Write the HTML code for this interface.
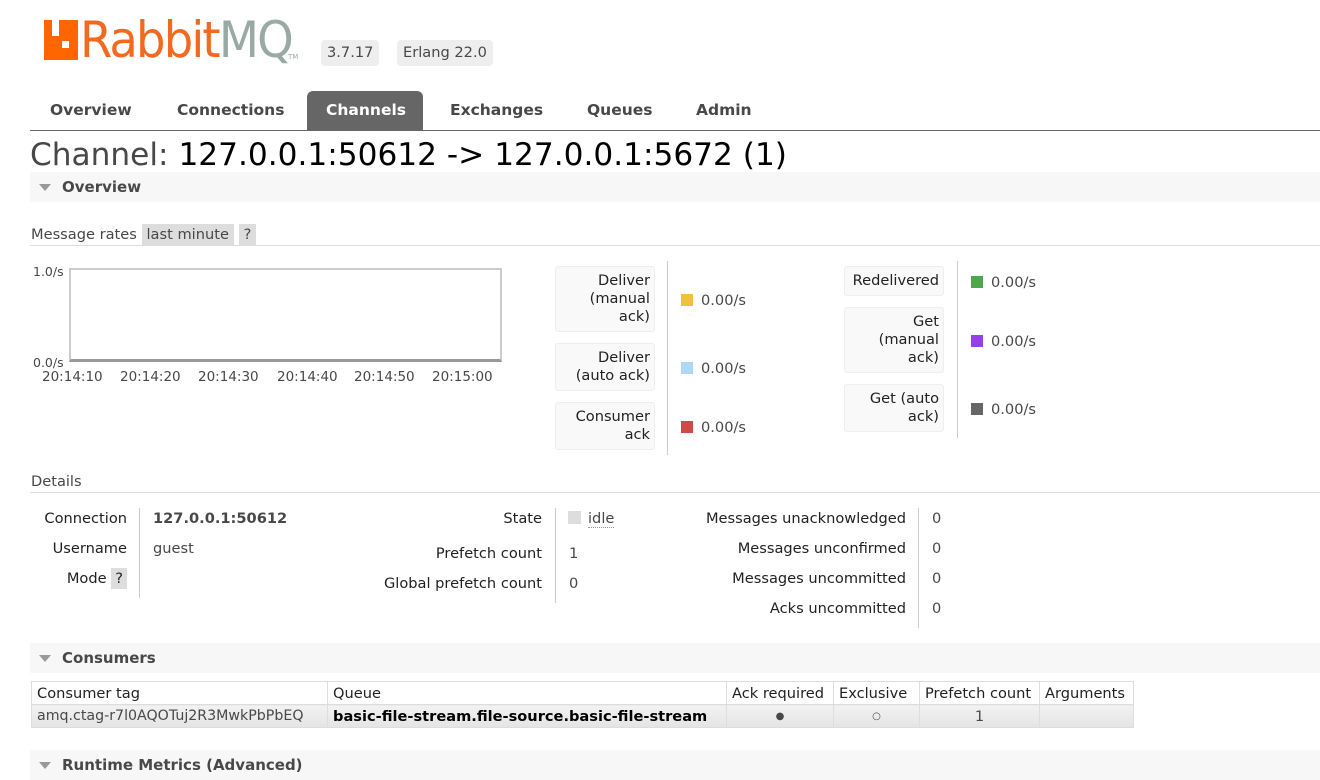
<!DOCTYPE html>
<html><head><meta charset="utf-8"><style>
*{margin:0;padding:0;box-sizing:border-box}
body{width:1320px;height:780px;background:#fff;font-family:"DejaVu Sans","Liberation Sans",sans-serif;font-size:14.6px;color:#484848;position:relative;overflow:hidden}
.a{position:absolute;white-space:nowrap}
.r{text-align:right}
.bar{position:absolute;left:30px;width:1290px;height:30px;background:#f7f7f7}
.bar span{position:absolute;left:32px;top:6px;font-weight:bold;font-size:15px;color:#484848}
.tri{position:absolute;left:9px;top:12px;width:0;height:0;border-left:6px solid transparent;border-right:6px solid transparent;border-top:7px solid #999}
.tab{position:absolute;top:101px;font-weight:bold;font-size:15.5px;color:#484848}
.lbl{position:absolute;background:#f9f9f9;border:1px solid #eee;border-radius:3px;text-align:right;padding:5px 4px 3px;color:#222;line-height:18px;width:100px}
.sw{display:inline-block;width:12px;height:12px;margin-right:8px;vertical-align:-1px}
.vl{position:absolute;width:1px;background:#ccc}
.hl{position:absolute;left:30px;width:1290px;height:1px;background:#ddd}
table{border-collapse:collapse;position:absolute;left:31px;top:681px;font-size:14.6px}
td,th{border:1px solid #ddd;padding:0 5px;height:23px;font-weight:normal;text-align:left;color:#222;white-space:nowrap}
th{padding:0 4px 0 5px}
tr.b td{background:linear-gradient(#f2f2f2,#e4e4e4);color:#484848}
</style></head><body>
<div class="a" style="left:44px;top:20px;width:34px;height:40px;background:#f60">
<div style="position:absolute;left:8px;top:0;width:7px;height:16px;background:#fff"></div>
<div style="position:absolute;left:18px;top:21px;width:7px;height:7px;background:#fff"></div></div>
<div class="a" style="left:80px;top:10px;font-size:50px;font-family:'DejaVu Sans';font-weight:normal;letter-spacing:-2px;color:#f26a21;line-height:60px;transform:scaleX(0.93);transform-origin:left">Rabbit<span style="color:#99aaa5">MQ</span></div>
<div class="a" style="left:288px;top:53px;font-size:7px;color:#99aaa5">TM</div>
<div class="a" style="left:321px;top:40px;background:#eee;border-radius:4px;padding:3px 6px;font-size:14.6px;line-height:20px">3.7.17</div>
<div class="a" style="left:397px;top:40px;background:#eee;border-radius:4px;padding:3px 6px;font-size:14.6px;line-height:20px">Erlang 22.0</div>

<div class="tab" style="left:50px">Overview</div>
<div class="tab" style="left:177px">Connections</div>
<div class="a" style="left:307px;top:91px;width:116px;height:40px;background:#666;border-radius:6px 6px 0 0"></div>
<div class="tab" style="left:326px;color:#fff">Channels</div>
<div class="tab" style="left:450px">Exchanges</div>
<div class="tab" style="left:587px">Queues</div>
<div class="tab" style="left:696px">Admin</div>
<div class="a" style="left:30px;top:130px;width:1290px;height:1px;background:#666"></div>

<div class="a" style="left:30px;top:136px;font-size:31.2px;color:#484848;line-height:38px">Channel: <span style="color:#000">127.0.0.1:50612 -&gt; 127.0.0.1:5672 (1)</span></div>

<div class="bar" style="top:172px"><div class="tri"></div><span>Overview</span></div>
<div class="a" style="left:31px;top:226px">Message rates <span style="background:#ddd;padding:2px 5px;color:#484848">last minute</span> <span style="background:#ddd;padding:2px 5px">?</span></div>
<div class="hl" style="top:245px"></div>

<div class="a" style="left:33px;top:264px;font-size:12.5px">1.0/s</div>
<div class="a" style="left:33px;top:355px;font-size:12.5px">0.0/s</div>
<div class="a" style="left:69px;top:268px;width:433px;height:94px;border:2px solid #ccc;border-bottom:3px solid #999"></div>
<div class="a" style="left:42px;top:369px;font-size:13.5px">20:14:10</div>
<div class="a" style="left:120px;top:369px;font-size:13.5px">20:14:20</div>
<div class="a" style="left:198px;top:369px;font-size:13.5px">20:14:30</div>
<div class="a" style="left:277px;top:369px;font-size:13.5px">20:14:40</div>
<div class="a" style="left:354px;top:369px;font-size:13.5px">20:14:50</div>
<div class="a" style="left:432px;top:369px;font-size:13.5px">20:15:00</div>

<div class="lbl" style="left:555px;top:266px;height:66px">Deliver<br>(manual<br>ack)</div>
<div class="lbl" style="left:555px;top:343px;height:48px">Deliver<br>(auto ack)</div>
<div class="lbl" style="left:555px;top:402px;height:48px">Consumer<br>ack</div>
<div class="vl" style="left:667px;top:261px;height:194px"></div>
<div class="a" style="left:681px;top:292px"><span class="sw" style="background:#edc240"></span>0.00/s</div>
<div class="a" style="left:681px;top:360px"><span class="sw" style="background:#afd8f8"></span>0.00/s</div>
<div class="a" style="left:681px;top:419px"><span class="sw" style="background:#cb4b4b"></span>0.00/s</div>

<div class="lbl" style="left:844px;top:266px;height:30px">Redelivered</div>
<div class="lbl" style="left:844px;top:307px;height:66px">Get<br>(manual<br>ack)</div>
<div class="lbl" style="left:844px;top:384px;height:48px">Get (auto<br>ack)</div>
<div class="vl" style="left:957px;top:261px;height:177px"></div>
<div class="a" style="left:971px;top:274px"><span class="sw" style="background:#4da74d"></span>0.00/s</div>
<div class="a" style="left:971px;top:333px"><span class="sw" style="background:#9440ed"></span>0.00/s</div>
<div class="a" style="left:971px;top:401px"><span class="sw" style="background:#666"></span>0.00/s</div>

<div class="a" style="left:31px;top:473px">Details</div>
<div class="hl" style="top:492px"></div>

<div class="a r" style="right:1193px;top:510px;color:#222">Connection</div>
<div class="a r" style="right:1193px;top:540px;color:#222">Username</div>
<div class="a r" style="right:1193px;top:570px;color:#222">Mode <span style="background:#ddd;padding:2px 4px">?</span></div>
<div class="vl" style="left:139px;top:508px;height:90px"></div>
<div class="a" style="left:153px;top:510px;font-weight:bold">127.0.0.1:50612</div>
<div class="a" style="left:153px;top:540px">guest</div>

<div class="a r" style="right:778px;top:510px;color:#222">State</div>
<div class="a r" style="right:778px;top:545px;color:#222">Prefetch count</div>
<div class="a r" style="right:778px;top:575px;color:#222">Global prefetch count</div>
<div class="vl" style="left:555px;top:508px;height:95px"></div>
<div class="a" style="left:568px;top:511px;width:13px;height:13px;background:#ddd"></div>
<div class="a" style="left:588px;top:510px;border-bottom:1px dotted #999;line-height:17px">idle</div>
<div class="a" style="left:569px;top:545px">1</div>
<div class="a" style="left:569px;top:575px">0</div>

<div class="a r" style="right:414px;top:510px;color:#222">Messages unacknowledged</div>
<div class="a r" style="right:414px;top:540px;color:#222">Messages unconfirmed</div>
<div class="a r" style="right:414px;top:570px;color:#222">Messages uncommitted</div>
<div class="a r" style="right:414px;top:600px;color:#222">Acks uncommitted</div>
<div class="vl" style="left:918px;top:508px;height:120px"></div>
<div class="a" style="left:932px;top:510px">0</div>
<div class="a" style="left:932px;top:540px">0</div>
<div class="a" style="left:932px;top:570px">0</div>
<div class="a" style="left:932px;top:600px">0</div>

<div class="bar" style="top:643px"><div class="tri"></div><span>Consumers</span></div>
<table>
<tr><th style="width:296px">Consumer tag</th><th style="width:399px">Queue</th><th style="width:107px">Ack required</th><th style="width:86px">Exclusive</th><th style="width:120px">Prefetch count</th><th style="width:94px">Arguments</th></tr>
<tr class="b"><td style="font-size:14.2px">amq.ctag-r7l0AQOTuj2R3MwkPbPbEQ</td><td style="font-weight:bold;color:#000;font-size:14.6px">basic-file-stream.file-source.basic-file-stream</td><td style="text-align:center;font-size:10px">●</td><td style="text-align:center;font-size:10px">○</td><td style="text-align:center">1</td><td></td></tr>
</table>

<div class="bar" style="top:750px"><div class="tri"></div><span>Runtime Metrics (Advanced)</span></div>
</body></html>
